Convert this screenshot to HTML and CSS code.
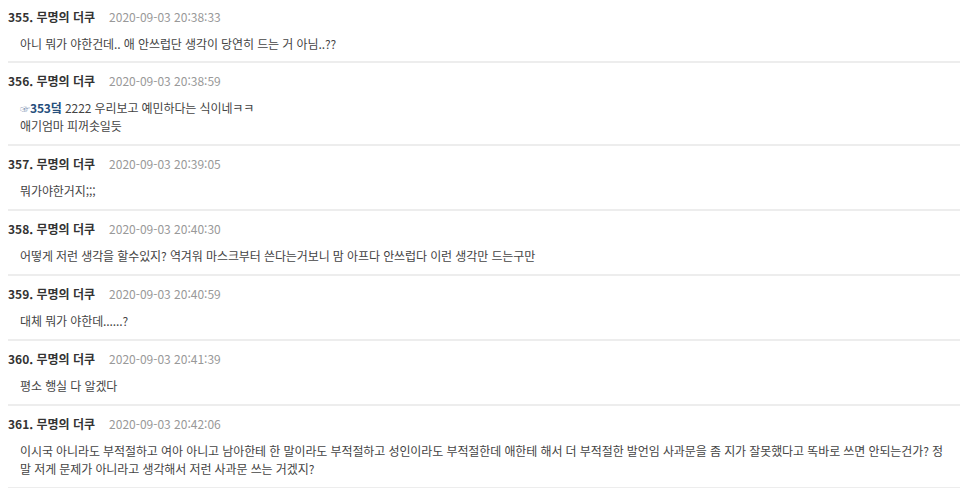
FILE: index.html
```html
<!DOCTYPE html>
<html lang="ko">
<head>
<meta charset="utf-8">
<link rel="stylesheet" href="styles.css">
</head>
<body>
<div class="list">
  <div class="comment first">
    <div class="head"><span class="num">355. 무명의 더쿠</span><span class="date">2020-09-03 20:38:33</span></div>
    <div class="body">아니 뭐가 야한건데.. 애 안쓰럽단 생각이 당연히 드는 거 아님..??</div>
  </div>
  <div class="comment">
    <div class="head"><span class="num">356. 무명의 더쿠</span><span class="date">2020-09-03 20:38:59</span></div>
    <div class="body"><span class="hand">☞</span><a class="ref">353덬</a> 2222 우리보고 예민하다는 식이네ㅋㅋ<br>애기엄마 피꺼솟일듯</div>
  </div>
  <div class="comment">
    <div class="head"><span class="num">357. 무명의 더쿠</span><span class="date">2020-09-03 20:39:05</span></div>
    <div class="body">뭐가야한거지;;;</div>
  </div>
  <div class="comment">
    <div class="head"><span class="num">358. 무명의 더쿠</span><span class="date">2020-09-03 20:40:30</span></div>
    <div class="body">어떻게 저런 생각을 할수있지? 역겨워 마스크부터 쓴다는거보니 맘 아프다 안쓰럽다 이런 생각만 드는구만</div>
  </div>
  <div class="comment">
    <div class="head"><span class="num">359. 무명의 더쿠</span><span class="date">2020-09-03 20:40:59</span></div>
    <div class="body">대체 뭐가 야한데......?</div>
  </div>
  <div class="comment">
    <div class="head"><span class="num">360. 무명의 더쿠</span><span class="date">2020-09-03 20:41:39</span></div>
    <div class="body">평소 행실 다 알겠다</div>
  </div>
  <div class="comment">
    <div class="head"><span class="num">361. 무명의 더쿠</span><span class="date">2020-09-03 20:42:06</span></div>
    <div class="body">이시국 아니라도 부적절하고 여아 아니고 남아한테 한 말이라도 부적절하고 성인이라도 부적절한데 애한테 해서 더 부적절한 발언임 사과문을 좀 지가 잘못했다고 똑바로 쓰면 안되는건가? 정말 저게 문제가 아니라고 생각해서 저런 사과문 쓰는 거겠지?</div>
  </div>
</div>
</body>
</html>
```
FILE: styles.css
```css
html, body {
  margin: 0;
  padding: 0;
  background: #fff;
}
body {
  font-family: "Noto Sans CJK KR", "Noto Sans", sans-serif;
  font-size: 12px;
  color: #444;
}
.list {
  padding: 0 0 0 8px;
}
.comment {
  padding: 9px 0 9px;
  border-bottom: 2px solid #ededed;
}
.comment.first {
  padding-top: 8px;
  padding-bottom: 8px;
}
.head {
  line-height: 18px;
  height: 18px;
  display: flex;
  gap: 14px;
}
.num {
  font-weight: bold;
  color: #333;
}
.date {
  color: #999;
}
.body {
  margin-top: 9px;
  padding: 0 10px 0 12px;
  line-height: 18px;
  color: #444;
  letter-spacing: -0.1px;
}
.hand {
  color: #7d93b3;
  font-size: 10px;
  line-height: 1;
}
.ref {
  color: #254e7c;
  font-weight: bold;
  line-height: 1;
}
```
